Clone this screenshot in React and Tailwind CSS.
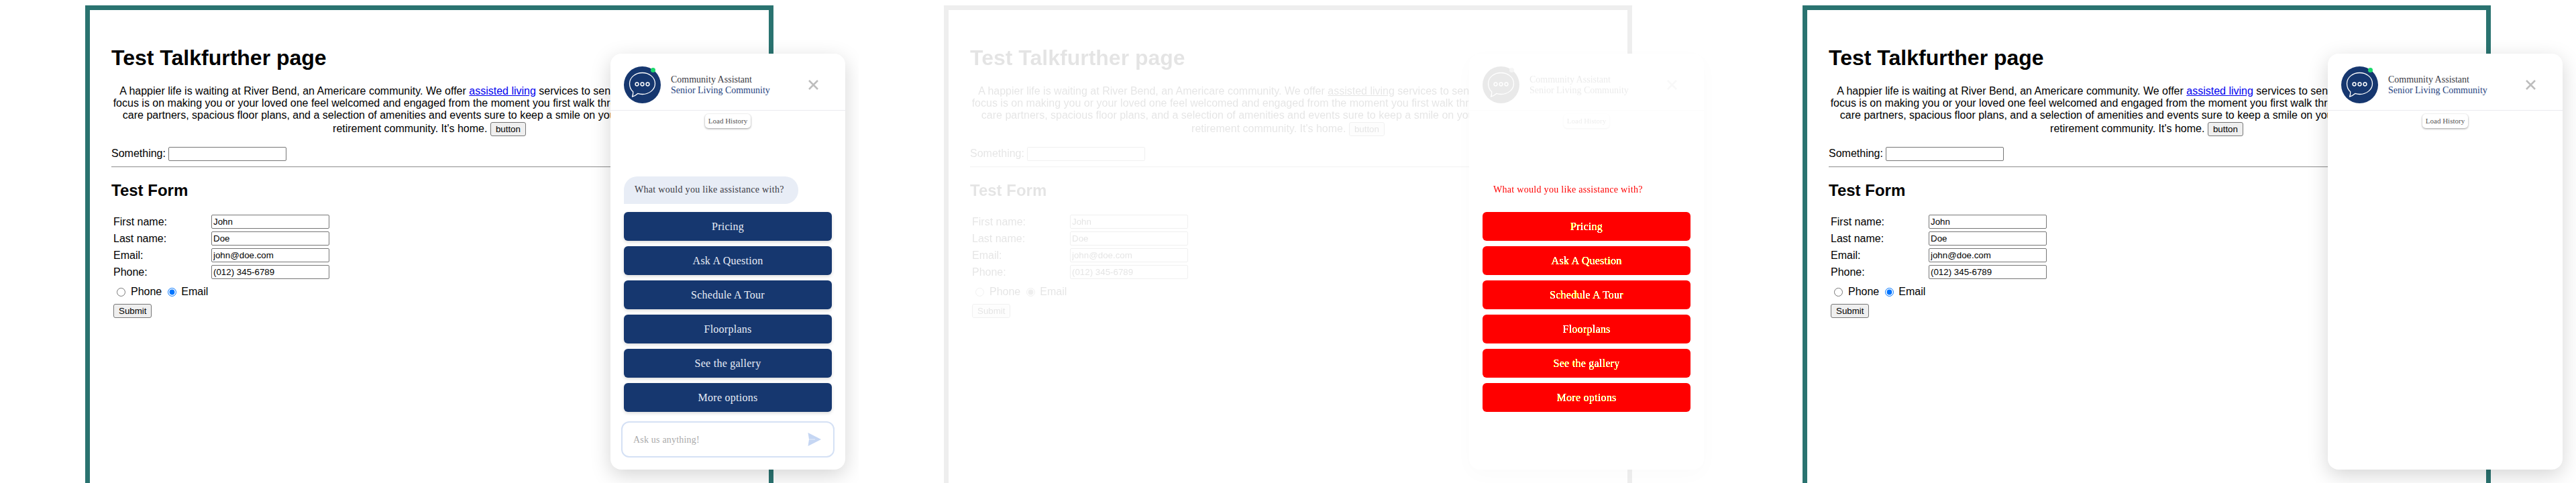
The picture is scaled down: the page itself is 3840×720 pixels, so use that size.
import React from "react";

const options = ["Pricing", "Ask A Question", "Schedule A Tour", "Floorplans", "See the gallery", "More options"];

function Logo() {
  return (
    <div className="relative w-[55px] h-[55px] shrink-0 rounded-full bg-[#16376f]">
      <svg viewBox="0 0 55 55" className="w-[55px] h-[55px]">
        <path
          d="M27.500 9.500c10.500 0 19 7 19 16s-8.500 16-19 16c-2.400 0-4.700-.4-6.800-1.100-2.600 2.300-5.300 3.800-8.200 4.800 1-2.600 1.400-5 1.200-7.400C10.500 35 8.500 30.500 8.500 25.500c0-9 8.500-16 19-16z"
          fill="none"
          stroke="#fff"
          strokeWidth="1.300"
          strokeLinejoin="round"
        />
        <circle cx="19.500" cy="26.500" r="2.400" fill="none" stroke="#fff" strokeWidth="1.500" />
        <circle cx="27.500" cy="26.500" r="2.400" fill="none" stroke="#fff" strokeWidth="1.500" />
        <circle cx="35.500" cy="26.500" r="2.400" fill="none" stroke="#fff" strokeWidth="1.500" />
      </svg>
      <span className="absolute top-[1.500px] right-[8px] w-[7px] h-[7px] rounded-full bg-[#1bd96c]" />
    </div>
  );
}

function Widget({ variant }) {
  const isDiff = variant === "diff";
  const fade = isDiff ? "grayscale opacity-10" : "";
  return (
    <div
      className={
        "absolute top-[80px] right-[20px] w-[350px] h-[620px] rounded-[16px] bg-white font-['Liberation_Serif',serif] " +
        (isDiff ? "shadow-[0_8px_30px_rgba(0,0,0,0.02)]" : "shadow-[0_8px_30px_rgba(0,0,0,0.17)]")
      }
    >
      <div className={"flex items-center h-[85px] pl-[20px] pt-[9px] border-b border-[#ebebef] " + fade}>
        <Logo />
        <div className="ml-[15px] text-[14px] leading-[16px]">
          <div className="text-[#3a3a44]">Community Assistant</div>
          <div className="text-[#1f4380]">Senior Living Community</div>
        </div>
        <svg viewBox="0 0 15 15" className="ml-auto mr-[40px] w-[15px] h-[15px]">
          <path d="M1 1l13 13M14 1L1 14" stroke="#bdbdbd" strokeWidth="2.500" />
        </svg>
      </div>
      <div className={"flex justify-center pt-[5px] " + fade}>
        <div className="w-[68px] h-[21px] rounded-[5px] bg-white text-center text-[11px] leading-[21px] text-[#555] shadow-[0_1px_3px_rgba(0,0,0,0.4)]">
          Load History
        </div>
      </div>

      {variant === "after" ? null : (
        <div className="ml-[20px] mt-[72px]">
          <div
            className={
              "w-[260px] h-[41px] pl-[16px] rounded-t-[20px] rounded-br-[20px] text-[14px] leading-[39px] tracking-[0.3px] " +
              (isDiff ? "text-[#ff0000] [filter:url(#aa-bubble)]" : "bg-[#e8edf6] text-[#3a3a44]")
            }
          >
            What would you like assistance with?
          </div>
          <div className={"mt-[12px] flex flex-col gap-[8px] " + (isDiff ? "[filter:url(#aa-button)]" : "")}>
            {options.map((label) => (
              <div
                key={label}
                className={
                  "w-[310px] h-[43px] rounded-[6px] text-center text-[16px] leading-[43px] tracking-[0.25px] " +
                  (isDiff ? "bg-[#ff0000] text-white" : "bg-[#16376f] text-[#e8edf6] shadow-[0_2px_5px_rgba(0,0,0,0.15)]")
                }
              >
                {label}
              </div>
            ))}
          </div>
        </div>
      )}

      {variant === "before" && (
        <div className="mt-[14px] ml-[16px] flex items-center justify-between w-[318px] h-[54px] pl-[16px] pr-[18px] rounded-[12px] border-2 border-[#d5e1f5] text-[14px] tracking-[0.2px] text-[#aaa]">
          <span>Ask us anything!</span>
          <svg viewBox="0 0 20 20" className="w-[20px] h-[20px]">
            <path d="M0.500 0l19.500 10L0.500 20l1.500-10z" fill="#c5d6f3" />
            <path d="M2 10h9" stroke="#e8effb" strokeWidth="1" />
          </svg>
        </div>
      )}
    </div>
  );
}

function TextField({ value }) {
  return (
    <input
      type="text"
      defaultValue={value}
      className="block w-[176px] h-[21px] px-[2px] py-px border border-[#767676] rounded-[2px] bg-white text-[13.33px] text-black"
    />
  );
}

function PlainButton({ children }) {
  return (
    <button className="inline-block h-[21px] px-[7px] border border-[#767676] rounded-[3px] bg-[#efefef] text-[13.33px] leading-[15px] text-black align-baseline">
      {children}
    </button>
  );
}

function TestPage({ variant }) {
  return (
    <div className={"mt-2 ml-[127px] w-[1026px] h-[760px] border-[7px] border-[#2a7370] p-[32px] font-['Liberation_Sans',sans-serif] text-[16px] leading-[18.400px] text-black " + (variant === "diff" ? "grayscale opacity-10" : "")}>
      <h1 className="mt-[21.440px] mb-[21.440px] text-[32px] leading-[36.800px] font-bold">Test Talkfurther page</h1>
      <p className="mb-[16px] text-center">
        A happier life is waiting at River Bend, an Americare community. We offer{" "}
        <a href="#" className="text-[#0000ee] underline">assisted living</a> services to seniors in Jackson, Texas. Our
        <br />
        focus is on making you or your loved one feel welcomed and engaged from the moment you first walk through our doors. With trusted
        <br />
        care partners, spacious floor plans, and a selection of amenities and events sure to keep a smile on your face, this is more than a
        <br />
        retirement community. It's home. <PlainButton>button</PlainButton>
      </p>
      <div className="flex items-center gap-[4px] h-[21px]">
        <span>Something:</span>
        <TextField value="" />
      </div>
      <hr className="mt-[8px] border-t border-b border-t-[#9a9a9a] border-b-[#eeeeee]" />
      <h2 className="mt-[20px] mb-[20px] text-[24px] leading-[27.600px] font-bold">Test Form</h2>
      <table className="border-separate [border-spacing:2px]">
        <tbody>
          {[
            ["First name:", "John"],
            ["Last name:", "Doe"],
            ["Email:", "john@doe.com"],
            ["Phone:", "(012) 345-6789"],
          ].map(([label, value]) => (
            <tr key={label}>
              <td className="w-[144px] p-px align-middle">{label}</td>
              <td className="p-px">
                <TextField value={value} />
              </td>
            </tr>
          ))}
        </tbody>
      </table>
      <div className="mt-[7px] ml-[8px] flex items-center h-[18px]">
        <input type="radio" name={"contact-" + variant} className="w-[13px] h-[13px]" />
        <span className="ml-[8px]">Phone</span>
        <input type="radio" name={"contact-" + variant} defaultChecked className="ml-[9px] w-[13px] h-[13px]" />
        <span className="ml-[7px]">Email</span>
      </div>
      <div className="mt-[9px] ml-[3px]">
        <PlainButton>Submit</PlainButton>
      </div>
    </div>
  );
}

function Panel({ variant }) {
  return (
    <div className="relative w-[1280px] h-[720px] shrink-0 overflow-hidden bg-white">
      <TestPage variant={variant} />
      <Widget variant={variant} />
    </div>
  );
}

export default function App() {
  return (
    <div className="flex w-[3840px] h-[720px] overflow-hidden bg-white">
      {/* edge pixels of the changed parts go yellow, like a pixel diff */}
      <svg className="absolute w-0 h-0">
        <filter id="aa-button" colorInterpolationFilters="sRGB" x="0" y="0" width="100%" height="100%">
          <feComponentTransfer>
            <feFuncG type="discrete" tableValues="0 0 0 1 1 1 1 1 1 1 1 1 1 1 1 1 1 1 1 1" />
            <feFuncB type="discrete" tableValues="0 0 0 0 0 0 0 0 0 0 1 1 1 1 1 1 1 1 1 1" />
          </feComponentTransfer>
        </filter>
        <filter id="aa-bubble" colorInterpolationFilters="sRGB" x="0" y="0" width="100%" height="100%">
          <feComponentTransfer>
            <feFuncG type="discrete" tableValues="0 0 0 0 0 1 1 1 1 1 1 1 1 1 1 1 1 1 1 1" />
            <feFuncB type="discrete" tableValues="0 0 0 0 0 0 0 0 0 0 0 0 0 0 0 0 0 0 0 1" />
          </feComponentTransfer>
        </filter>
      </svg>
      <Panel variant="before" />
      <Panel variant="diff" />
      <Panel variant="after" />
    </div>
  );
}
